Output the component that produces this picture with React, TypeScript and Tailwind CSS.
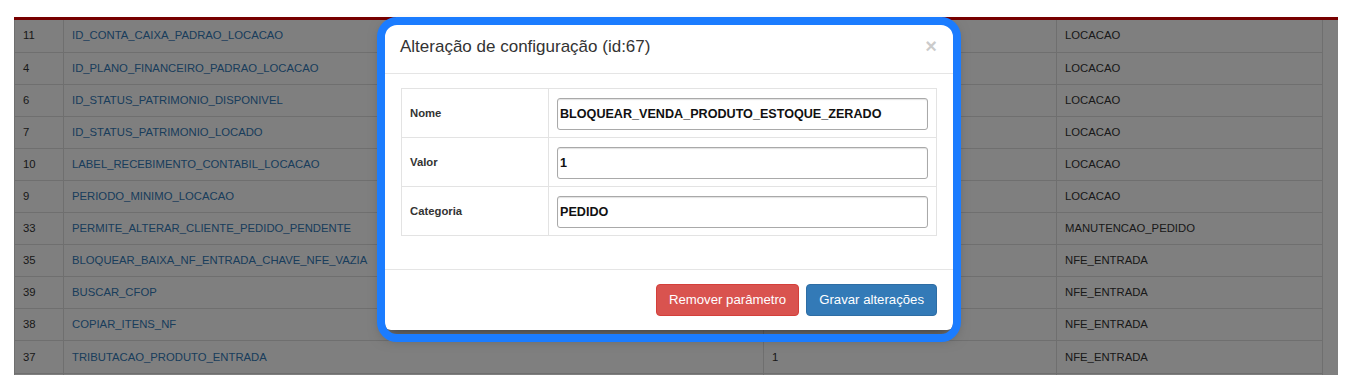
import React from 'react'

// col3 values are hidden behind the modal except for the last full row
const rows = [
  { id: '11', name: 'ID_CONTA_CAIXA_PADRAO_LOCACAO', value: '', cat: 'LOCACAO' },
  { id: '4', name: 'ID_PLANO_FINANCEIRO_PADRAO_LOCACAO', value: '', cat: 'LOCACAO' },
  { id: '6', name: 'ID_STATUS_PATRIMONIO_DISPONIVEL', value: '', cat: 'LOCACAO' },
  { id: '7', name: 'ID_STATUS_PATRIMONIO_LOCADO', value: '', cat: 'LOCACAO' },
  { id: '10', name: 'LABEL_RECEBIMENTO_CONTABIL_LOCACAO', value: '', cat: 'LOCACAO' },
  { id: '9', name: 'PERIODO_MINIMO_LOCACAO', value: '', cat: 'LOCACAO' },
  { id: '33', name: 'PERMITE_ALTERAR_CLIENTE_PEDIDO_PENDENTE', value: '', cat: 'MANUTENCAO_PEDIDO' },
  { id: '35', name: 'BLOQUEAR_BAIXA_NF_ENTRADA_CHAVE_NFE_VAZIA', value: '', cat: 'NFE_ENTRADA' },
  { id: '39', name: 'BUSCAR_CFOP', value: '', cat: 'NFE_ENTRADA' },
  { id: '38', name: 'COPIAR_ITENS_NF', value: '', cat: 'NFE_ENTRADA' },
  { id: '37', name: 'TRIBUTACAO_PRODUTO_ENTRADA', value: '1', cat: 'NFE_ENTRADA' },
  { id: '', name: '', value: '', cat: '' },
]

const fields = [
  { label: 'Nome', value: 'BLOQUEAR_VENDA_PRODUTO_ESTOQUE_ZERADO' },
  { label: 'Valor', value: '1' },
  { label: 'Categoria', value: 'PEDIDO' },
]

const App = () => {
  return (
    <div
      className="relative h-[382px] w-full overflow-hidden bg-white pl-[14px] pt-[17px]"
      style={{ fontFamily: '"Liberation Sans", Arial, sans-serif' }}
    >
      {/* Config list behind the backdrop */}
      <div className="relative h-[358px] w-[1324px] overflow-hidden bg-white">
        <div className="h-[3px] bg-[#ee0000]" />
        <table className="w-[1308px] table-fixed border-collapse text-[11.3px] text-[#333]">
          <colgroup>
            <col className="w-[49px]" />
            <col className="w-[700px]" />
            <col className="w-[293px]" />
            <col className="w-[266px]" />
          </colgroup>
          <tbody>
            {rows.map((r, i) => (
              <tr key={i} className="h-[32.1px]">
                <td className="border border-t-0 border-[#dedede] px-[8px]">{r.id}</td>
                <td className="border border-t-0 border-[#dedede] px-[8px] text-[#337ab7]">{r.name}</td>
                <td className="border border-t-0 border-[#dedede] px-[8px]">{r.value}</td>
                <td className="border border-t-0 border-[#dedede] px-[8px]">{r.cat}</td>
              </tr>
            ))}
          </tbody>
        </table>
        <div className="absolute inset-0 bg-black/50" />
      </div>

      {/* Modal */}
      <div className="absolute left-[385px] top-[25px] w-[568px] rounded-[6px] bg-white shadow-[0_5px_15px_rgba(0,0,0,0.5)]">
        <div className="flex h-[49px] items-center border-b border-[#e5e5e5] pb-[4px] pl-[15px] pr-[16px]">
          <h4 className="text-[17px] leading-[1.3] text-[#333]">Alteração de configuração (id:67)</h4>
          <span className="ml-auto -mt-[2px] text-[20px] font-bold leading-none text-black opacity-20">×</span>
        </div>

        <div className="pb-[33px] pl-[16px] pr-[16px] pt-[14px]">
          <table className="w-full table-fixed border-collapse">
            <colgroup>
              <col className="w-[147px]" />
              <col />
            </colgroup>
            <tbody>
              {fields.map((f) => (
                <tr key={f.label} className="h-[49px]">
                  <td className="border border-[#e3e3e3] px-[8px] text-[11.3px] font-bold text-[#333]">
                    {f.label}
                  </td>
                  <td className="border border-[#e3e3e3] px-[8px] pb-[7px] pt-[8px]">
                    <input
                      readOnly
                      value={f.value}
                      className="block h-[32px] w-full rounded-[3px] border border-[#a9a9a9] pl-[2px] text-[12.6px] font-bold text-[#111] shadow-[inset_0_1px_1px_rgba(0,0,0,0.12)] outline-none"
                      style={{ fontFamily: '"Liberation Sans", Arial, sans-serif' }}
                    />
                  </td>
                </tr>
              ))}
            </tbody>
          </table>
        </div>

        <div className="flex justify-end gap-[7px] border-t border-[#e5e5e5] px-[16px] py-[14px]">
          <button className="h-[32px] rounded-[4px] border border-[#d43f3a] bg-[#d9534f] px-[12px] text-[13.2px] text-white">
            Remover parâmetro
          </button>
          <button className="h-[32px] rounded-[4px] border border-[#2e6da4] bg-[#337ab7] px-[12px] text-[13.2px] text-white">
            Gravar alterações
          </button>
        </div>
      </div>

      {/* Highlight ring */}
      <div className="pointer-events-none absolute left-[377px] top-[17px] h-[325px] w-[584px] rounded-[20px] border-[8px] border-[#1b7cff]" />
    </div>
  )
}

export default App
